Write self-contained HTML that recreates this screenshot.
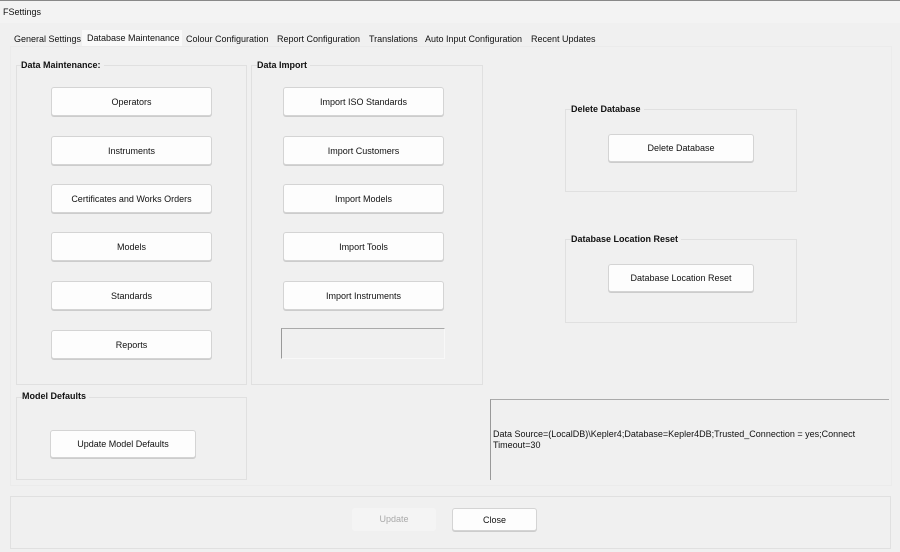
<!DOCTYPE html>
<html><head><style>
body{margin:0;width:900px;height:552px;background:#f0f0f0;font-family:"Liberation Sans",sans-serif;font-size:9px;color:#111;position:relative;overflow:hidden}
.a{position:absolute}
.title{left:0;top:0;width:900px;height:22px;background:#f3f3f3;border-top:1px solid #888}
.title span{position:absolute;left:3px;top:6px;font-size:9px}
.tab{top:34px;font-size:9px}
.g{position:absolute;border:1px solid #e0e0e0}
.gl{position:absolute;font-weight:bold;font-size:9px;background:#f0f0f0;padding-right:3px}
.b{position:absolute;background:#fdfdfd;border:1px solid #d4d4d4;border-radius:3px;box-shadow:0 1px 0 #cccccc;text-align:center;font-size:9px;box-sizing:border-box}
</style></head><body>
<div class="a title"><span>FSettings</span></div>
<div class="a" style="left:82px;top:30px;width:100px;height:16px;background:#f9f9f9"></div>
<div class="a tab" style="left:14px">General Settings</div>
<div class="a tab" style="left:87px;top:33px">Database Maintenance</div>
<div class="a tab" style="left:186px">Colour Configuration</div>
<div class="a tab" style="left:277px">Report Configuration</div>
<div class="a tab" style="left:369px">Translations</div>
<div class="a tab" style="left:425px">Auto Input Configuration</div>
<div class="a tab" style="left:531px">Recent Updates</div>
<div class="g" style="left:10px;top:46px;width:880px;height:438px;border-color:#ebebeb"></div>

<div class="g" style="left:16px;top:65px;width:229px;height:318px"></div>
<div class="gl" style="left:21px;top:60px">Data Maintenance:</div>
<div class="g" style="left:251px;top:65px;width:230px;height:318px"></div>
<div class="gl" style="left:257px;top:60px">Data Import</div>

<div class="b" style="left:51px;top:87px;width:161px;height:29px;line-height:28px">Operators</div>
<div class="b" style="left:51px;top:136px;width:161px;height:29px;line-height:28px">Instruments</div>
<div class="b" style="left:51px;top:184px;width:161px;height:29px;line-height:28px">Certificates and Works Orders</div>
<div class="b" style="left:51px;top:232px;width:161px;height:29px;line-height:28px">Models</div>
<div class="b" style="left:51px;top:281px;width:161px;height:29px;line-height:28px">Standards</div>
<div class="b" style="left:51px;top:330px;width:161px;height:29px;line-height:28px">Reports</div>

<div class="b" style="left:283px;top:87px;width:161px;height:29px;line-height:28px">Import ISO Standards</div>
<div class="b" style="left:283px;top:136px;width:161px;height:29px;line-height:28px">Import Customers</div>
<div class="b" style="left:283px;top:184px;width:161px;height:29px;line-height:28px">Import Models</div>
<div class="b" style="left:283px;top:232px;width:161px;height:29px;line-height:28px">Import Tools</div>
<div class="b" style="left:283px;top:281px;width:161px;height:29px;line-height:28px">Import Instruments</div>
<div class="a" style="left:281px;top:328px;width:162px;height:29px;border:1px solid #ccc;border-left-color:#999;border-top-color:#aaa;border-right-color:#f8f8f8;border-bottom-color:#f8f8f8"></div>

<div class="g" style="left:16px;top:397px;width:229px;height:81px"></div>
<div class="gl" style="left:22px;top:391px">Model Defaults</div>
<div class="b" style="left:50px;top:430px;width:146px;height:28px;line-height:27px">Update Model Defaults</div>

<div class="g" style="left:565px;top:109px;width:230px;height:81px"></div>
<div class="gl" style="left:571px;top:104px">Delete Database</div>
<div class="b" style="left:608px;top:134px;width:146px;height:28px;line-height:27px">Delete Database</div>

<div class="g" style="left:565px;top:239px;width:230px;height:82px"></div>
<div class="gl" style="left:571px;top:234px">Database Location Reset</div>
<div class="b" style="left:608px;top:264px;width:146px;height:28px;line-height:27px">Database Location Reset</div>

<div class="a" style="left:490px;top:399px;width:398px;height:80px;border-left:1px solid #999;border-top:1px solid #aaa"></div>
<div class="a" style="left:493px;top:429px;line-height:11px">Data Source=(LocalDB)\Kepler4;Database=Kepler4DB;Trusted_Connection = yes;Connect<br>Timeout=30</div>

<div class="a" style="left:10px;top:496px;width:879px;height:51px;border:1px solid #e0e0e0"></div>
<div class="a" style="left:352px;top:508px;width:84px;height:23px;background:#f4f4f4;border-radius:3px;color:#aaa;text-align:center;line-height:23px">Update</div>
<div class="b" style="left:452px;top:508px;width:85px;height:23px;line-height:22px">Close</div>
</body></html>
